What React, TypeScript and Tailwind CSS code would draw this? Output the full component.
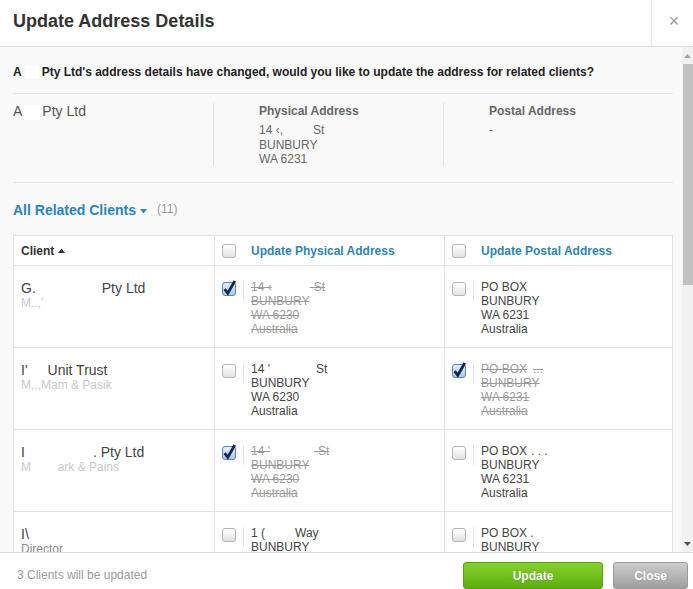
import React from "react";

type Seg = string | { gap: number };

const Line = ({ segs }: { segs: Seg[] }) => (
  <div className="whitespace-nowrap">
    {segs.map((s, i) =>
      typeof s === "string" ? (
        <span key={i}>{s}</span>
      ) : (
        <span key={i} className="inline-block" style={{ width: s.gap }} />
      )
    )}
  </div>
);

const Checkbox = ({ checked }: { checked?: boolean }) => (
  <div className="relative w-[14px] h-[14px] shrink-0">
    {checked ? (
      <div className="w-[14px] h-[14px] rounded-[3px] border border-[#5b86b0] bg-gradient-to-b from-[#e4effa] to-[#a8c9e8]" />
    ) : (
      <div className="w-[14px] h-[14px] rounded-[3px] border border-[#b4b4b4] bg-gradient-to-b from-[#ffffff] to-[#e2e2e2]" />
    )}
    {checked && (
      <svg
        className="absolute left-0 top-0 overflow-visible"
        width="14"
        height="14"
        viewBox="0 0 14 14"
      >
        <path
          d="M2.6 7.2 L5.8 11.2 L12.8 -1"
          fill="none"
          stroke="#16284a"
          strokeWidth="2.8"
          strokeLinejoin="miter"
          strokeLinecap="butt"
        />
      </svg>
    )}
  </div>
);

type Row = {
  name: Seg[];
  sub: string;
  subDark?: boolean;
  phys: Seg[][];
  physChecked: boolean;
  postal: Seg[][];
  postalChecked: boolean;
};

const rows: Row[] = [
  {
    name: ["G.", { gap: 66 }, "Pty Ltd"],
    sub: "M..,'",
    phys: [["14 ‹", { gap: 38 }, "-St"], ["BUNBURY"], ["WA 6230"], ["Australia"]],
    physChecked: true,
    postal: [["PO BOX"], ["BUNBURY"], ["WA 6231"], ["Australia"]],
    postalChecked: false,
  },
  {
    name: ["I'", { gap: 20 }, "Unit Trust"],
    sub: "M,,,Mam & Pasik",
    phys: [["14 '", { gap: 46 }, "St"], ["BUNBURY"], ["WA 6230"], ["Australia"]],
    physChecked: false,
    postal: [["PO BOX", { gap: 6 }, "..."], ["BUNBURY"], ["WA 6231"], ["Australia"]],
    postalChecked: true,
  },
  {
    name: ["I", { gap: 68 }, ".  Pty Ltd"],
    sub: "M        ark & Pains",
    phys: [["14 '", { gap: 44 }, "-St"], ["BUNBURY"], ["WA 6230"], ["Australia"]],
    physChecked: true,
    postal: [["PO BOX", { gap: 4 }, ". . ."], ["BUNBURY"], ["WA 6231"], ["Australia"]],
    postalChecked: false,
  },
  {
    name: ["I\\"],
    sub: "Director",
    subDark: true,
    phys: [["1 (", { gap: 30 }, "Way"], ["BUNBURY"], ["WA 6230"], ["Australia"]],
    physChecked: false,
    postal: [["PO BOX ."], ["BUNBURY"], ["WA 6231"], ["Australia"]],
    postalChecked: false,
  },
];

const AddressCell = ({
  lines,
  checked,
}: {
  lines: Seg[][];
  checked: boolean;
}) => (
  <div className="flex items-start pl-[7px] pt-[16px] border-l border-[#e3e3e3]">
    <Checkbox checked={checked} />
    <div className="ml-[7px] mt-[-1px] w-px h-[20px] bg-[#e3e3e3]" />
    <div
      className={`ml-[7px] mt-[-2px] text-[12px] leading-[14px] ${
        checked ? "text-[#9a9a9a] line-through" : "text-[#444]"
      }`}
    >
      {lines.map((l, i) => (
        <Line key={i} segs={l} />
      ))}
    </div>
  </div>
);

export default function App() {
  return (
    <div className="w-[693px] h-[589px] bg-white flex flex-col overflow-hidden font-['Liberation_Sans',Arial,sans-serif]">
      {/* Header */}
      <div className="h-[47px] shrink-0 flex border-b border-[#dcdcdc] bg-white">
        <div className="flex-1 flex items-center pl-[13px]">
          <h1 className="text-[18px] font-bold text-[#333] mt-[-4px]">
            Update Address Details
          </h1>
        </div>
        <div className="w-[42px] border-l border-[#e6e6e6] flex items-center justify-center">
          <span className="text-[18px] leading-none text-[#9a9a9a] mt-[-4px] ml-[3px]">
            ×
          </span>
        </div>
      </div>

      {/* Body */}
      <div className="flex-1 flex min-h-0 bg-[#f9f9f9]">
        <div className="flex-1 min-w-0 overflow-hidden pl-[13px] pr-[9px]">
          <div className="pt-[18px] pb-[14px] border-b border-[#e6e6e6] text-[12px] leading-[14px] font-bold text-[#222] whitespace-nowrap">
            A<span className="inline-block w-[14px] h-[13px] bg-white align-middle mx-[3px]" />Pty Ltd's
            address details have changed, would you like to update the address
            for related clients?
          </div>

          <div className="grid grid-cols-[200px_230px_230px] pt-[9px] pb-[16px] border-b border-[#e6e6e6]">
            <div className="text-[14px] leading-[16px] text-[#555]">
              A<span className="inline-block w-[16px] h-[15px] bg-white align-middle mx-[2px]" />Pty Ltd
            </div>
            <div className="border-l border-[#e3e3e3] pl-[45px] h-[63px]">
              <div className="mt-[1px] text-[12px] leading-[14px] font-bold text-[#666]">
                Physical Address
              </div>
              <div className="mt-[5px] text-[12px] leading-[14.5px] text-[#666]">
                <Line segs={["14 ‹,", { gap: 30 }, "St"]} />
                <div>BUNBURY</div>
                <div>WA 6231</div>
              </div>
            </div>
            <div className="border-l border-[#e3e3e3] pl-[45px] h-[63px]">
              <div className="mt-[1px] text-[12px] leading-[14px] font-bold text-[#666]">
                Postal Address
              </div>
              <div className="mt-[5px] text-[12px] leading-[14.5px] text-[#666]">
                -
              </div>
            </div>
          </div>

          <div className="mt-[19px] flex items-center h-[16px]">
            <span className="text-[14px] font-bold text-[#2a86b6]">
              All Related Clients
            </span>
            <svg width="7" height="5" viewBox="0 0 7 5" className="ml-[4px] mt-[2px]">
              <path d="M0 0 L7 0 L3.5 4.5 Z" fill="#2a86b6" />
            </svg>
            <span className="ml-[10px] text-[12px] text-[#999] mt-[-2px]">(11)</span>
          </div>

          {/* Table */}
          <div className="mt-[17px] w-[660px] bg-white border border-[#e3e3e3]">
            <div className="grid grid-cols-[200px_230px_229px] h-[30px] border-b border-[#e3e3e3]">
              <div className="flex items-center pl-[7px] text-[12px] font-bold text-[#333]">
                Client
                <svg width="7" height="5" viewBox="0 0 7 5" className="ml-[4px]">
                  <path d="M0 5 L7 5 L3.5 0.5 Z" fill="#333" />
                </svg>
              </div>
              <div className="flex items-center pl-[7px] border-l border-[#e3e3e3]">
                <Checkbox />
                <span className="ml-[15px] text-[12px] font-bold text-[#2a86b6]">
                  Update Physical Address
                </span>
              </div>
              <div className="flex items-center pl-[7px] border-l border-[#e3e3e3]">
                <Checkbox />
                <span className="ml-[15px] text-[12px] font-bold text-[#2a86b6]">
                  Update Postal Address
                </span>
              </div>
            </div>
            {rows.map((r, i) => (
              <div
                key={i}
                className="grid grid-cols-[200px_230px_229px] h-[82px] border-b border-[#e3e3e3]"
              >
                <div className="pl-[7px] pt-[14px]">
                  <div className="text-[14px] leading-[17px] text-[#444]">
                    <Line segs={r.name} />
                  </div>
                  <div
                    className={`text-[12px] leading-[13px] whitespace-pre ${
                      r.subDark ? "text-[#888]" : "text-[#c9c9c9]"
                    }`}
                  >
                    {r.sub}
                  </div>
                </div>
                <AddressCell lines={r.phys} checked={r.physChecked} />
                <AddressCell lines={r.postal} checked={r.postalChecked} />
              </div>
            ))}
          </div>
        </div>

        {/* Scrollbar */}
        <div className="w-[11px] shrink-0 bg-[#f1f1f1] flex flex-col items-center">
          <div className="h-[17px] flex items-center justify-center">
            <svg width="7" height="4" viewBox="0 0 7 4">
              <path d="M0 4 L7 4 L3.5 0 Z" fill="#a3a3a3" />
            </svg>
          </div>
          <div className="w-[10px] h-[221px] bg-[#c1c1c1]" />
          <div className="flex-1" />
          <div className="h-[17px] flex items-center justify-center">
            <svg width="7" height="4" viewBox="0 0 7 4">
              <path d="M0 0 L7 0 L3.5 4 Z" fill="#505050" />
            </svg>
          </div>
        </div>
      </div>

      {/* Footer */}
      <div className="h-[37px] shrink-0 border-t border-[#dcdcdc] bg-white flex items-center">
        <span className="ml-[17px] text-[12px] text-[#9a9a9a] mt-[8px]">
          3 Clients will be updated
        </span>
        <div className="flex-1" />
        <button className="w-[140px] h-[27px] mt-[9px] rounded-[3px] border border-[#55a513] bg-gradient-to-b from-[#86d22a] to-[#5ead10] text-white text-[12px] font-bold [text-shadow:0_0_1px_rgba(0,0,0,0.25)]">
          Update
        </button>
        <button className="ml-[10px] mr-[5px] w-[75px] h-[27px] mt-[9px] rounded-[3px] border border-[#9a9a9a] bg-gradient-to-b from-[#cdcdcd] to-[#9e9e9e] text-white text-[12px] font-bold [text-shadow:0_0_1px_rgba(0,0,0,0.25)]">
          Close
        </button>
      </div>
    </div>
  );
}
